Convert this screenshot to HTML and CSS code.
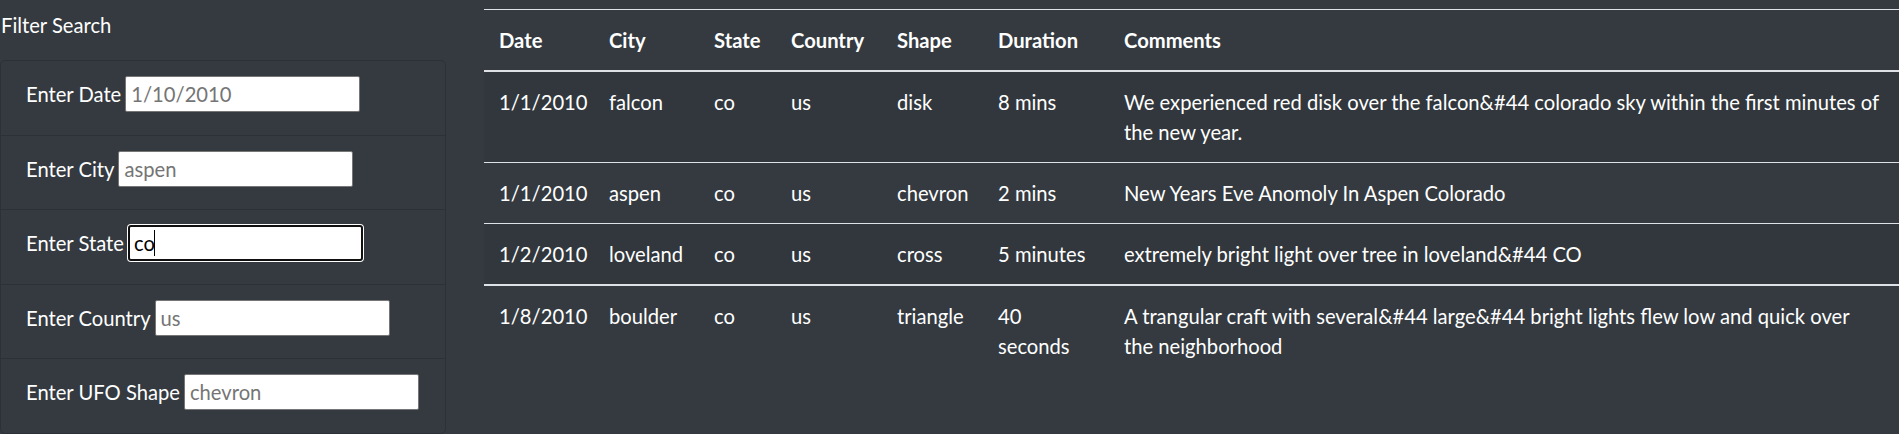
FILE: index.html
```html
<!DOCTYPE html>
<html lang="en">
<head>
<meta charset="utf-8">
<title>UFO Sightings</title>
<link rel="stylesheet" href="styles.css">
</head>
<body>
<div class="page">
  <aside class="filters">
    <div class="filters-title">Filter Search</div>
    <ul class="filter-list">
      <li class="filter-item">
        <label class="filter-label" for="datetime">Enter Date</label>
        <input class="filter-input" id="datetime" type="text" placeholder="1/10/2010">
      </li>
      <li class="filter-item">
        <label class="filter-label" for="city">Enter City</label>
        <input class="filter-input" id="city" type="text" placeholder="aspen">
      </li>
      <li class="filter-item">
        <label class="filter-label" for="state">Enter State</label>
        <span class="input-wrap">
          <input class="filter-input is-focused" id="state" type="text" value="co">
          <span class="caret"></span>
        </span>
      </li>
      <li class="filter-item">
        <label class="filter-label" for="country">Enter Country</label>
        <input class="filter-input" id="country" type="text" placeholder="us">
      </li>
      <li class="filter-item">
        <label class="filter-label" for="shape">Enter UFO Shape</label>
        <input class="filter-input" id="shape" type="text" placeholder="chevron">
      </li>
    </ul>
  </aside>
  <main class="results">
    <table class="ufo-table">
      <thead>
        <tr>
          <th class="col-date">Date</th>
          <th class="col-city">City</th>
          <th class="col-state">State</th>
          <th class="col-country">Country</th>
          <th class="col-shape">Shape</th>
          <th class="col-duration">Duration</th>
          <th class="col-comments">Comments</th>
        </tr>
      </thead>
      <tbody>
        <tr>
          <td>1/1/2010</td><td>falcon</td><td>co</td><td>us</td><td>disk</td><td>8 mins</td>
          <td class="comment">We experienced red disk over the falcon&amp;#44 colorado sky within the first minutes of the new year.</td>
        </tr>
        <tr>
          <td>1/1/2010</td><td>aspen</td><td>co</td><td>us</td><td>chevron</td><td>2 mins</td>
          <td class="comment">New Years Eve Anomoly In Aspen Colorado</td>
        </tr>
        <tr>
          <td>1/2/2010</td><td>loveland</td><td>co</td><td>us</td><td>cross</td><td>5 minutes</td>
          <td class="comment">extremely bright light over tree in loveland&amp;#44 CO</td>
        </tr>
        <tr class="row-break">
          <td>1/8/2010</td><td>boulder</td><td>co</td><td>us</td><td>triangle</td><td>40 seconds</td>
          <td class="comment">A trangular craft with several&amp;#44 large&amp;#44 bright lights flew low and quick over the neighborhood</td>
        </tr>
      </tbody>
    </table>
  </main>
</div>
</body>
</html>
```

FILE: styles.css
```css
html, body {
  margin: 0;
  padding: 0;
}

body {
  background: #343a40;
  color: #ffffff;
  font-family: Lato, "Liberation Sans", sans-serif;
  font-size: 20.2px;
  line-height: 30px;
}

.page {
  display: flex;
  align-items: flex-start;
  gap: 38px;
}

.filters {
  width: 446px;
  flex: none;
  padding-top: 10px;
}

.filters-title {
  line-height: 30px;
  margin-bottom: 20px;
  padding-left: 1px;
}

.filter-list {
  list-style: none;
  margin: 0;
  padding: 0;
  border: 1px solid rgba(0, 0, 0, 0.14);
  border-radius: 5px;
}

.filter-item {
  display: flex;
  align-items: center;
  gap: 4px;
  padding: 15px 25px 22.6px;
}

.filter-item + .filter-item {
  border-top: 1px solid rgba(0, 0, 0, 0.14);
}

.filter-label {
  white-space: nowrap;
}

.filter-input {
  box-sizing: border-box;
  width: 235px;
  height: 36px;
  margin: 0;
  padding: 0 5px;
  border: 1px solid #767676;
  border-radius: 2px;
  background: #ffffff;
  color: #000000;
  font-family: Lato, "Liberation Sans", sans-serif;
  font-size: 20.2px;
  outline: none;
}

.filter-input::placeholder {
  color: #757575;
}

.input-wrap {
  position: relative;
  display: inline-block;
  height: 36px;
}

.filter-input.is-focused {
  border: 2px solid #101010;
  border-radius: 3px;
  box-shadow: 0 0 0 1px #ffffff;
  padding: 0 4px;
}

.caret {
  position: absolute;
  left: 26px;
  top: 5px;
  width: 1px;
  height: 26px;
  background: #000000;
}

.results {
  flex: 1;
  min-width: 0;
  margin-top: 9px;
}

.ufo-table {
  width: 100%;
  border-collapse: collapse;
  table-layout: fixed;
}

.ufo-table th,
.ufo-table td {
  box-sizing: border-box;
  padding: 15px;
  text-align: left;
  vertical-align: top;
  border-top: 1px solid #dee2e6;
}

.ufo-table td.comment {
  padding-right: 20px;
}

.ufo-table thead th {
  font-weight: 700;
  border-bottom: 2px solid #dee2e6;
}

.ufo-table tbody tr:nth-child(odd) {
  background: rgba(0, 0, 0, 0.05);
}

.ufo-table tbody tr.row-break td {
  border-top: 2px solid #dee2e6;
}

.col-date { width: 110px; }
.col-city { width: 105px; }
.col-state { width: 77px; }
.col-country { width: 106px; }
.col-shape { width: 101px; }
.col-duration { width: 126px; }
```
